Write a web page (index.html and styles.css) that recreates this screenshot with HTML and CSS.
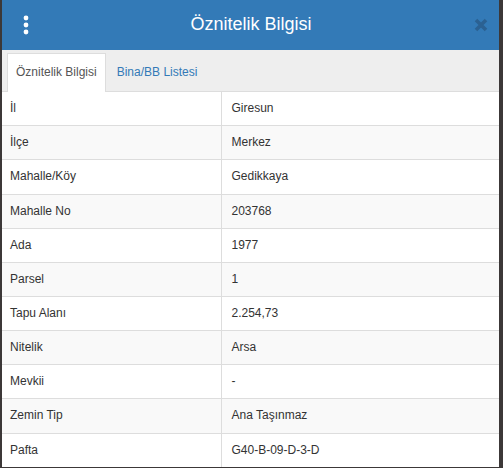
FILE: index.html
```html
<!DOCTYPE html>
<html lang="tr">
<head>
    <meta charset="UTF-8">
    <meta name="viewport" content="width=device-width, initial-scale=1.0">
    <title>Öznitelik Bilgisi</title>
    <link rel="stylesheet" href="styles.css">
</head>
<body>
    <div id="panel">
        <div class="panel-header">
            <button class="btn-menu" title="Menü">
                <svg width="8" height="20" viewBox="0 0 8 20">
                    <circle cx="4" cy="3" r="2.4" fill="#fff"/>
                    <circle cx="4" cy="10" r="2.4" fill="#fff"/>
                    <circle cx="4" cy="17" r="2.4" fill="#fff"/>
                </svg>
            </button>
            <h4 class="panel-title">Öznitelik Bilgisi</h4>
            <button class="btn-close" title="Kapat">
                <svg width="14" height="14" viewBox="0 0 14 14">
                    <path d="M2 2 L12 12 M12 2 L2 12" stroke="#2b6192" stroke-width="3.6" stroke-linecap="butt"/>
                </svg>
            </button>
        </div>
        <ul class="tabs">
            <li class="tab active"><a href="#">Öznitelik Bilgisi</a></li>
            <li class="tab"><a href="#">Bina/BB Listesi</a></li>
        </ul>
        <table class="attr-table">
            <tr><td class="label">İl</td><td>Giresun</td></tr>
            <tr><td class="label">İlçe</td><td>Merkez</td></tr>
            <tr><td class="label">Mahalle/Köy</td><td>Gedikkaya</td></tr>
            <tr><td class="label">Mahalle No</td><td>203768</td></tr>
            <tr><td class="label">Ada</td><td>1977</td></tr>
            <tr><td class="label">Parsel</td><td>1</td></tr>
            <tr><td class="label">Tapu Alanı</td><td>2.254,73</td></tr>
            <tr><td class="label">Nitelik</td><td>Arsa</td></tr>
            <tr><td class="label">Mevkii</td><td>-</td></tr>
            <tr><td class="label">Zemin Tip</td><td>Ana Taşınmaz</td></tr>
            <tr><td class="label">Pafta</td><td>G40-B-09-D-3-D</td></tr>
        </table>
    </div>
</body>
</html>
```

FILE: styles.css
```css
* {
    margin: 0;
    padding: 0;
    box-sizing: border-box;
}

body {
    background-color: #3c3838;
    height: 468px;
    overflow: hidden;
    font-family: "Liberation Sans", Arial, Helvetica, sans-serif;
    font-size: 12px;
    line-height: 1.428571;
    color: #333;
}

#panel {
    margin-left: 2px;
    width: 497px;
    background-color: #fff;
}

.panel-header {
    height: 50px;
    background-color: #337ab7;
    display: flex;
    align-items: center;
    padding: 0 10px 0 20px;
}

.btn-menu, .btn-close {
    background: none;
    border: none;
    cursor: pointer;
    display: flex;
    align-items: center;
}

.btn-menu {
    width: 8px;
}

.panel-title {
    flex: 1;
    text-align: center;
    color: #fff;
    font-size: 18px;
    font-weight: normal;
    margin-right: 2px;
}

.btn-close {
    width: 14px;
    margin-right: 1px;
}

.tabs {
    list-style: none;
    display: flex;
    background-color: #eee;
    padding: 3px 5px 0;
    border-bottom: 1px solid #ddd;
}

.tab {
    margin-right: 2px;
    margin-bottom: -1px;
}

.tab a {
    display: block;
    padding: 10px 8px;
    border: 1px solid transparent;
    border-bottom: none;
    color: #337ab7;
    text-decoration: none;
}

.tab.active a {
    background-color: #fff;
    border-color: #ddd;
    color: #555;
    padding-bottom: 11px;
}

.attr-table {
    width: 100%;
    border-collapse: collapse;
}

.attr-table td {
    padding: 8px 8px 8px 10px;
    border-top: 1px solid #ddd;
    vertical-align: top;
}

.attr-table tr:first-child td {
    border-top: none;
}

.attr-table tr:nth-child(even) td {
    background-color: #f9f9f9;
}

.attr-table td.label {
    width: 219px;
    padding-left: 8px;
    border-right: 1px solid #ddd;
}
```
